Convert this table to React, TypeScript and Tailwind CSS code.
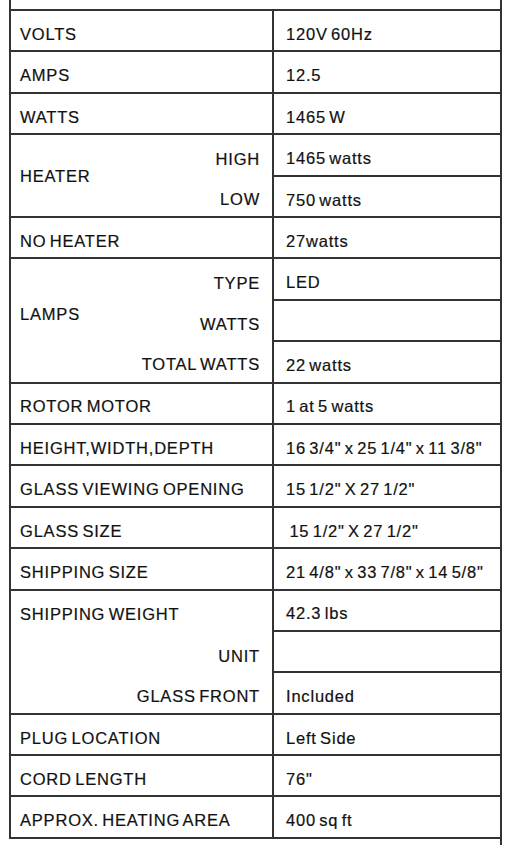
import React from "react";

type Simple = { label: string; value: string };

const line = "border-[#333]";
const text =
  "text-[16.5px] leading-none text-[#111] tracking-[0.8px] [word-spacing:-2px] [-webkit-text-stroke:0.2px_#111]";

const SimpleRow = ({ label, value }: Simple) => (
  <div className={`grid h-[41.4px] grid-cols-[263px_1fr] border-t-2 ${line}`}>
    <div className={`flex items-center border-r-2 pl-[9px] pt-[7px] ${line}`}>{label}</div>
    <div className="flex items-center pl-[12px] pt-[7px]">{value}</div>
  </div>
);

// stacked sub-rows; only the value column draws lines between them
const Slots = ({ items, right }: { items: React.ReactNode[]; right?: boolean }) => (
  <div className="flex h-full flex-col">
    {items.map((item, i) => (
      <div
        key={i}
        className={`flex flex-1 items-center pt-[7px] ${right ? "justify-end pr-[12px]" : "pl-[12px]"} ${
          i > 0 && !right ? `border-t-2 ${line}` : ""
        }`}
      >
        {item}
      </div>
    ))}
  </div>
);

const App = () => {
  return (
    <div className={`min-h-[845px] bg-white pl-[9px] ${text}`} style={{ fontFamily: '"Liberation Sans", Arial, sans-serif' }}>
      <div className={`w-[493px] border-x-2 border-b-2 ${line}`}>
        <div className="h-[9px]" />
        <SimpleRow label="VOLTS" value="120V 60Hz" />
        <SimpleRow label="AMPS" value="12.5" />
        <SimpleRow label="WATTS" value="1465 W" />

        <div className={`grid h-[82.8px] grid-cols-[263px_1fr] border-t-2 ${line}`}>
          <div className={`flex border-r-2 ${line}`}>
            <div className="flex flex-1 items-center pl-[9px] pt-[2px]">HEATER</div>
            <div className="w-[100px]">
              <Slots right items={["HIGH", "LOW"]} />
            </div>
          </div>
          <Slots items={["1465 watts", "750 watts"]} />
        </div>

        <SimpleRow label="NO HEATER" value="27watts" />

        <div className={`grid h-[124.2px] grid-cols-[263px_1fr] border-t-2 ${line}`}>
          <div className={`flex border-r-2 ${line}`}>
            <div className="flex flex-1 items-center pb-[12px] pl-[9px]">LAMPS</div>
            <div className="w-[160px]">
              <Slots right items={["TYPE", "WATTS", "TOTAL WATTS"]} />
            </div>
          </div>
          <Slots items={["LED", "", "22 watts"]} />
        </div>

        <SimpleRow label="ROTOR MOTOR" value="1 at 5 watts" />
        <SimpleRow label="HEIGHT,WIDTH,DEPTH" value={'16 3/4" x 25 1/4" x 11 3/8"'} />
        <SimpleRow label="GLASS VIEWING OPENING" value={'15 1/2" X 27 1/2"'} />
        <SimpleRow label="GLASS SIZE" value={'\u00a015 1/2" X 27 1/2"'} />
        <SimpleRow label="SHIPPING SIZE" value={'21 4/8" x 33 7/8" x 14 5/8"'} />

        <div className={`grid h-[124.2px] grid-cols-[263px_1fr] border-t-2 ${line}`}>
          <div className={`flex flex-col border-r-2 ${line}`}>
            <div className="flex flex-1 items-center pl-[9px] pt-[7px]">SHIPPING WEIGHT</div>
            <div className="flex flex-1 items-center justify-end pr-[12px] pt-[10px]">UNIT</div>
            <div className="flex flex-1 items-center justify-end pr-[12px] pt-[7px]">GLASS FRONT</div>
          </div>
          <Slots items={["42.3 lbs", "", "Included"]} />
        </div>

        <SimpleRow label="PLUG LOCATION" value="Left Side" />
        <SimpleRow label="CORD LENGTH" value={'76"'} />
        <SimpleRow label="APPROX. HEATING AREA" value="400 sq ft" />
      </div>
      <div className={`h-[8px] w-[493px] border-r-2 ${line}`} />
    </div>
  );
};

export default App;
